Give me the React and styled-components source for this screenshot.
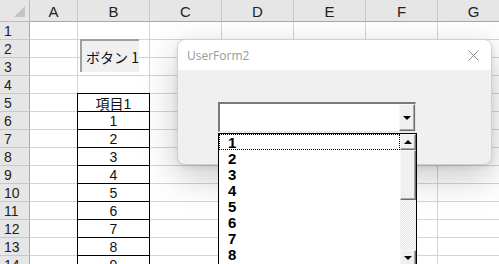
import React from 'react';
import styled, { createGlobalStyle } from 'styled-components';

const COLS = ['A', 'B', 'C', 'D', 'E', 'F', 'G'];
const COL_WIDTHS = [48, 72, 72, 72, 72, 72, 72];
const ROWS = Array.from({ length: 14 }, (_, i) => i + 1);
const TABLE = { 5: '項目1', 6: '1', 7: '2', 8: '3', 9: '4', 10: '5', 11: '6', 12: '7', 13: '8', 14: '9' };
const ITEMS = ['1', '2', '3', '4', '5', '6', '7', '8', '9'];

const GlobalStyle = createGlobalStyle`
  html, body {
    margin: 0;
    padding: 0;
    background: #ffffff;
    overflow: hidden;
  }
`;

const Page = styled.div`
  position: relative;
  width: 499px;
  height: 264px;
  overflow: hidden;
  font-family: "Liberation Sans", "Noto Sans CJK JP", sans-serif;
`;

const Sheet = styled.div`
  display: grid;
  grid-template-columns: 30px ${COL_WIDTHS.map(w => `${w}px`).join(' ')};
  grid-template-rows: 22px repeat(14, 18px);
`;

const Corner = styled.div`
  background: #e6e6e6;
  border-right: 1px solid #bcbcbc;
  border-bottom: 1px solid #bcbcbc;
  position: relative;

  &::after {
    content: '';
    position: absolute;
    right: 4px;
    bottom: 4px;
    border-left: 11px solid transparent;
    border-bottom: 11px solid #c4c4c4;
  }
`;

const ColHead = styled.div`
  background: #e6e6e6;
  border-right: 1px solid #c8c8c8;
  border-bottom: 1px solid #a8a8a8;
  display: flex;
  align-items: center;
  justify-content: center;
  font-size: 15px;
  color: #222;
  padding-top: 2px;
`;

const RowHead = styled.div`
  background: #e6e6e6;
  border-right: 1px solid #a8a8a8;
  border-bottom: 1px solid #c8c8c8;
  display: flex;
  align-items: center;
  padding-left: 4px;
  font-size: 14px;
  color: #222;
`;

const Cell = styled.div`
  border-right: 1px solid ${p => (p.$boxed ? '#000' : '#d4d4d4')};
  border-bottom: 1px solid ${p => (p.$boxed ? '#000' : '#d4d4d4')};
  border-left: ${p => (p.$boxed ? '1px solid #000' : 'none')};
  margin-left: ${p => (p.$boxed ? '-1px' : '0')};
  border-top: ${p => (p.$top ? '1px solid #000' : 'none')};
  margin-top: ${p => (p.$top ? '-1px' : '0')};
  display: flex;
  align-items: center;
  justify-content: center;
  font-size: 14px;
  color: #111;
  font-family: "Liberation Sans", "Noto Sans CJK JP", sans-serif;
`;

const SheetButton = styled.div`
  position: absolute;
  left: 80px;
  top: 39px;
  width: 59px;
  height: 33px;
  box-sizing: border-box;
  background: #f0f0f0;
  border-top: 2px solid #a0a0a0;
  border-left: 2px solid #a0a0a0;
  display: flex;
  align-items: center;
  padding-left: 4px;
  font-size: 14px;
  color: #111;
  font-family: "Noto Sans CJK JP", sans-serif;
  white-space: nowrap;
`;

const Window = styled.div`
  position: absolute;
  left: 177px;
  top: 39px;
  width: 315px;
  height: 126px;
  box-sizing: border-box;
  border: 1px solid #d0d0d0;
  border-radius: 8px;
  overflow: hidden;
  background: #f0f0f0;
  box-shadow: 0 12px 36px rgba(0, 0, 0, 0.22), 0 2px 6px rgba(0, 0, 0, 0.08);
  display: flex;
  flex-direction: column;
`;

const TitleBar = styled.div`
  height: 30px;
  background: #ffffff;
  display: flex;
  align-items: center;
  justify-content: space-between;
  padding: 0 12px 0 9px;
  font-family: "Open Sans", "Noto Sans", sans-serif;
  font-size: 12px;
  color: #9a9a9a;
`;

const Body = styled.div`
  flex: 1;
  padding: 32px 0 0 40px;
`;

const Combo = styled.div`
  width: 198px;
  height: 30px;
  box-sizing: border-box;
  background: #fff;
  border-top: 2px solid #7a7a7a;
  border-left: 2px solid #7a7a7a;
  border-right: 1px solid #e4e4e4;
  border-bottom: 1px solid #e4e4e4;
  display: flex;
  justify-content: flex-end;
`;

const ArrowButton = styled.div`
  width: 16px;
  box-sizing: border-box;
  background: #f0f0f0;
  border-top: 1px solid #f8f8f8;
  border-left: 1px solid #f8f8f8;
  border-right: 1px solid #6e6e6e;
  border-bottom: 1px solid #6e6e6e;
  box-shadow: inset -1px -1px 0 #a8a8a8;
  display: flex;
  align-items: center;
  justify-content: center;
  height: ${p => p.$h || 'auto'};
`;

const Tri = styled.div`
  width: 0;
  height: 0;
  border-left: 4px solid transparent;
  border-right: 4px solid transparent;
  ${p => (p.$up ? 'border-bottom: 4px solid #000;' : 'border-top: 4px solid #000;')}
`;

const DropList = styled.div`
  position: absolute;
  left: 218px;
  top: 133px;
  width: 199px;
  height: 134px;
  box-sizing: border-box;
  background: #fff;
  border: 1px solid #000;
  display: flex;
`;

const Items = styled.div`
  flex: 1;
  display: flex;
  flex-direction: column;
`;

const Item = styled.div`
  height: 16px;
  box-sizing: border-box;
  padding-left: 8px;
  font-family: "Liberation Sans", sans-serif;
  font-weight: bold;
  font-size: 15px;
  line-height: 16px;
  color: #000;
  border: 1px dotted ${p => (p.$focus ? '#000' : 'transparent')};
  flex-shrink: 0;
`;

const ScrollBar = styled.div`
  width: 16px;
  display: flex;
  flex-direction: column;
  background-color: #f4f4f4;
  background-image: repeating-conic-gradient(#e6e6e6 0 25%, #fafafa 0 50%);
  background-size: 2px 2px;
`;

const Thumb = styled(ArrowButton)`
  height: 50px;
`;

const Spacer = styled.div`
  flex: 1;
`;

const CloseIcon = () => (
  <svg width="11" height="11" viewBox="0 0 11 11">
    <path d="M0.5 0.5 L10.5 10.5 M10.5 0.5 L0.5 10.5" stroke="#8a8a8a" strokeWidth="1" fill="none" />
  </svg>
);

const App = () => (
  <Page>
    <GlobalStyle />
    <Sheet>
      <Corner />
      {COLS.map(c => <ColHead key={c}>{c}</ColHead>)}
      {ROWS.map(r => (
        <React.Fragment key={r}>
          <RowHead>{r}</RowHead>
          {COLS.map(c => {
            const boxed = c === 'B' && TABLE[r] !== undefined;
            return (
              <Cell key={c} $boxed={boxed} $top={boxed && r === 5}>
                {c === 'B' ? TABLE[r] : null}
              </Cell>
            );
          })}
        </React.Fragment>
      ))}
    </Sheet>

    <SheetButton>ボタン 1</SheetButton>

    <Window>
      <TitleBar>
        <span>UserForm2</span>
        <CloseIcon />
      </TitleBar>
      <Body>
        <Combo>
          <ArrowButton><Tri /></ArrowButton>
        </Combo>
      </Body>
    </Window>

    <DropList>
      <Items>
        {ITEMS.map((it, i) => <Item key={it} $focus={i === 0}>{it}</Item>)}
      </Items>
      <ScrollBar>
        <ArrowButton $h="16px"><Tri $up /></ArrowButton>
        <Thumb />
        <Spacer />
        <ArrowButton $h="16px"><Tri /></ArrowButton>
      </ScrollBar>
    </DropList>
  </Page>
);

export default App;
